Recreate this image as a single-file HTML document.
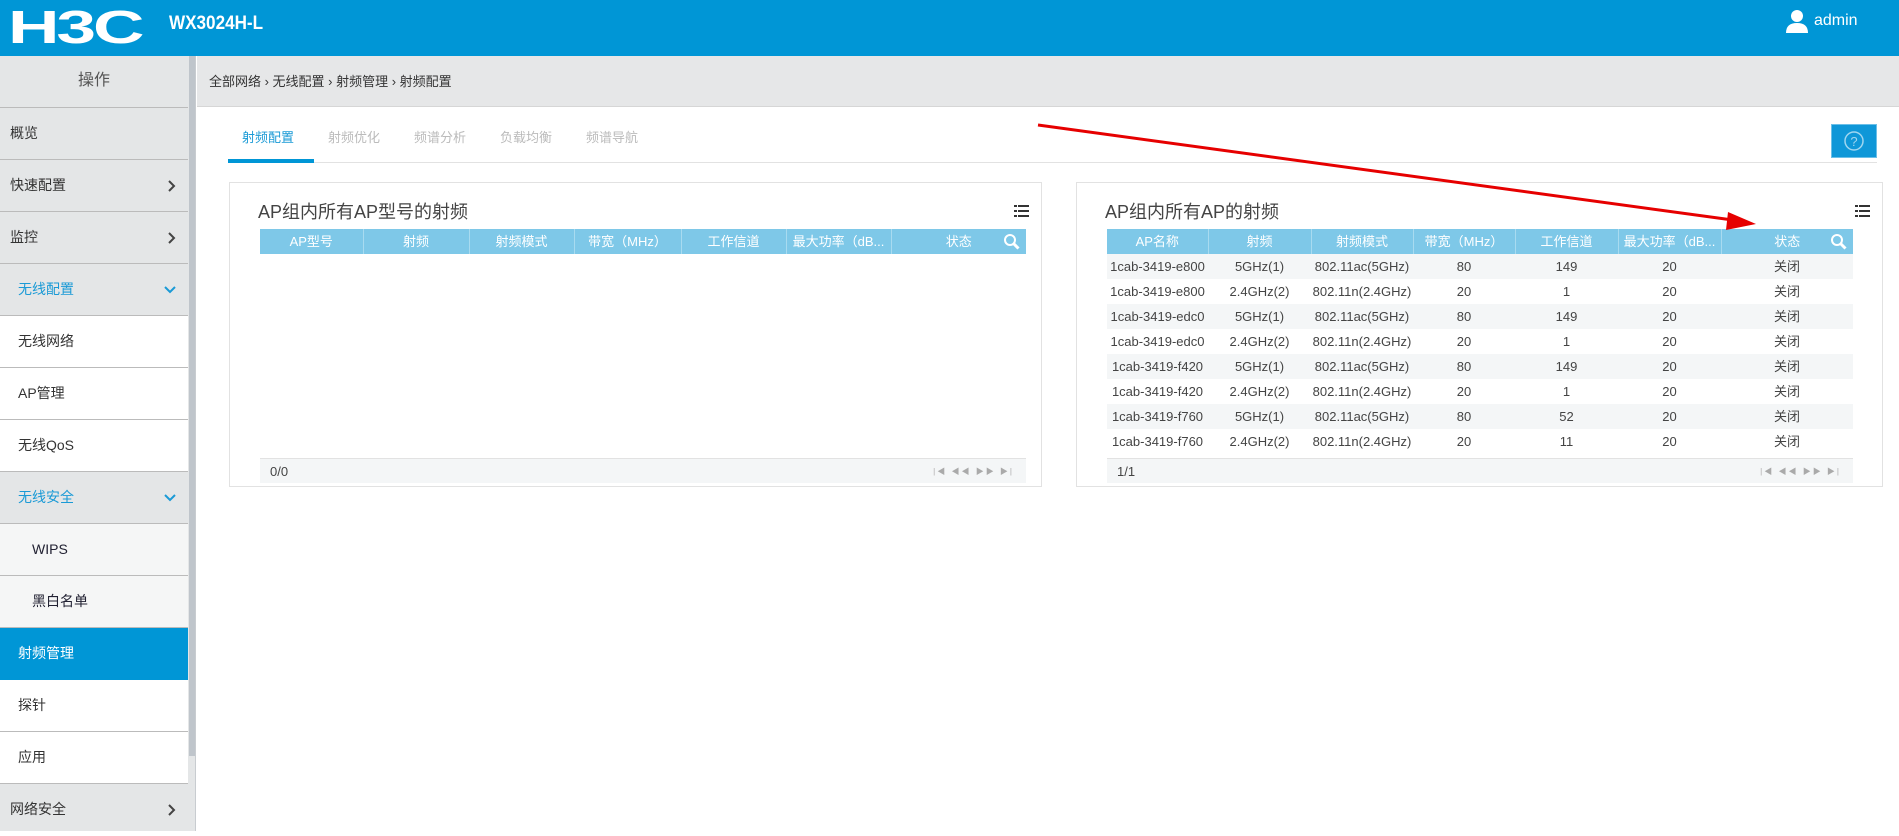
<!DOCTYPE html>
<html><head><meta charset="utf-8">
<style>
*{box-sizing:border-box;margin:0;padding:0}
body{width:1899px;height:831px;overflow:hidden;background:#fff;font-family:"Liberation Sans","Noto Sans CJK SC",sans-serif;color:#333;position:relative}
.hdr{position:absolute;left:0;top:0;width:1899px;height:56px;background:#0096d6;color:#fff}
.logo{position:absolute;left:8px;top:4px;font:bold 46px/46px "Liberation Sans",sans-serif;letter-spacing:-2px;transform:scaleX(1.55);transform-origin:left}
.model{position:absolute;left:169px;top:13px;font:bold 19px "Liberation Sans",sans-serif;transform:scaleX(.9);transform-origin:left}
.user{position:absolute;left:1814px;top:12px;font-size:16px}
.side{position:absolute;left:0;top:56px;width:188px;height:775px;background:#e4e6e7}
.sb{position:absolute;left:188px;top:56px;width:8px;height:775px;background:#e4e6e7;border-right:1px solid #c8ccd0}
.sb div{position:absolute;left:1px;top:0;width:6px;height:700px;background:#bfc5cb}
.it{position:absolute;left:0;width:188px;height:52px;border-bottom:1px solid #bbb;font-size:14px;line-height:50px;padding-left:10px;color:#333}
.it svg{position:absolute;right:12px;top:20px}
.crumb{position:absolute;left:197px;top:56px;width:1702px;height:51px;background:#e6e7e8;border-bottom:1px solid #d6d6d6;font-size:13px;line-height:51px;padding-left:12px;color:#333}
.tabs{position:absolute;left:228px;top:162px;width:1649px;border-top:1px solid #e2e2e2}
.tab{position:absolute;top:127px;font-size:13px;color:#bbb}
.help{position:absolute;left:1831px;top:124px;width:46px;height:34px;background:#0f97d8;border:1px solid #6bbfe8}
.panel{position:absolute;top:182px;height:305px;border:1px solid #e2e2e2;background:#fff}
.ptitle{position:absolute;left:28px;top:15px;font-size:18px;color:#444}
.menu{position:absolute;right:12px;top:22px;width:15px;height:12px}
table{position:absolute;border-collapse:collapse;font-size:13px;top:46px;table-layout:fixed}
th{background:#7ec8e8;color:#fff;font-weight:normal;height:25px;line-height:25px;padding:0;border-right:1px solid #a8dbf0;text-align:center;white-space:nowrap;overflow:hidden;vertical-align:middle}
td{height:25px;line-height:25px;padding:0;text-align:center;color:#444;white-space:nowrap;vertical-align:middle}
tr.o td{background:#f4f6f7}
.mg{position:absolute;right:6px;top:4px}
.foot{position:absolute;height:25px;background:#f4f6f7;border-top:1px solid #e2e2e2;font-size:13px;line-height:25px;padding-left:10px;color:#444}
.pg{position:absolute;right:12px;top:0;font-size:8px;color:#aaa;letter-spacing:2px}
</style></head><body>
<div class="hdr">
 <div class="logo">H3C</div>
 <div class="model">WX3024H-L</div>
 <svg style="position:absolute;left:1785px;top:9px" width="24" height="24" viewBox="0 0 24 24"><circle cx="12" cy="7" r="6" fill="#fff"/><path d="M1 24 Q1 14 12 14 Q23 14 23 24Z" fill="#fff"/></svg>
 <div class="user">admin</div>
</div>
<div class="side">
 <div class="it" style="top:0;text-align:center;padding:0;font-size:16px;color:#555">操作</div>
 <div class="it" style="top:52px">概览</div>
 <div class="it" style="top:104px">快速配置<svg width="8" height="12"><polyline points="1,1 6,6 1,11" fill="none" stroke="#444" stroke-width="2"/></svg></div>
 <div class="it" style="top:156px">监控<svg width="8" height="12"><polyline points="1,1 6,6 1,11" fill="none" stroke="#444" stroke-width="2"/></svg></div>
 <div class="it" style="top:208px;color:#1a9ad6;padding-left:18px">无线配置<svg width="12" height="8" style="top:22px"><polyline points="1,1 6,6 11,1" fill="none" stroke="#1a9ad6" stroke-width="2"/></svg></div>
 <div class="it" style="top:260px;background:#fff;padding-left:18px">无线网络</div>
 <div class="it" style="top:312px;background:#fff;padding-left:18px">AP管理</div>
 <div class="it" style="top:364px;background:#fff;padding-left:18px">无线QoS</div>
 <div class="it" style="top:416px;color:#1a9ad6;padding-left:18px">无线安全<svg width="12" height="8" style="top:22px"><polyline points="1,1 6,6 11,1" fill="none" stroke="#1a9ad6" stroke-width="2"/></svg></div>
 <div class="it" style="top:468px;background:#f5f6f6;padding-left:32px;color:#223">WIPS</div>
 <div class="it" style="top:520px;background:#f5f6f6;padding-left:32px;color:#223">黑白名单</div>
 <div class="it" style="top:572px;background:#0096d6;color:#fff;padding-left:18px;border-bottom-color:#0096d6">射频管理</div>
 <div class="it" style="top:624px;background:#fff;padding-left:18px">探针</div>
 <div class="it" style="top:676px;background:#fff;padding-left:18px">应用</div>
 <div class="it" style="top:728px;border:none">网络安全<svg width="8" height="12"><polyline points="1,1 6,6 1,11" fill="none" stroke="#444" stroke-width="2"/></svg></div>
</div>
<div class="sb"><div></div></div>
<div class="crumb">全部网络 › 无线配置 › 射频管理 › 射频配置</div>
<div class="tabs"></div>
<div class="tab" style="left:242px;color:#1a9ad6">射频配置</div>
<div style="position:absolute;left:228px;top:159px;width:86px;height:4px;background:#0096d6"></div>
<div class="tab" style="left:328px">射频优化</div>
<div class="tab" style="left:414px">频谱分析</div>
<div class="tab" style="left:500px">负载均衡</div>
<div class="tab" style="left:586px">频谱导航</div>
<div class="help"><svg width="44" height="32" viewBox="0 0 44 32"><circle cx="22" cy="16" r="9" fill="none" stroke="#9fd6f0" stroke-width="1.5"/><text x="22" y="21" font-size="13" fill="#9fd6f0" text-anchor="middle" font-family="Liberation Sans">?</text></svg></div>

<div class="panel" style="left:229px;width:813px">
 <div class="ptitle">AP组内所有AP型号的射频</div>
 <svg class="menu" viewBox="0 0 15 12"><g fill="#333"><rect x="0" y="0" width="3" height="2"/><rect x="4" y="0" width="11" height="2"/><rect x="0" y="5" width="3" height="2"/><rect x="4" y="5" width="11" height="2"/><rect x="0" y="10" width="3" height="2"/><rect x="4" y="10" width="11" height="2"/></g></svg>
 <table style="left:30px;width:766px">
  <tr><th style="width:103px">AP型号</th><th style="width:106px">射频</th><th style="width:105px">射频模式</th><th style="width:107px">带宽（MHz）</th><th style="width:105px">工作信道</th><th style="width:105px">最大功率（dB...</th><th style="border:none;position:relative">状态<svg class="mg" width="17" height="17" viewBox="0 0 17 17"><circle cx="7" cy="7" r="5" fill="none" stroke="#fff" stroke-width="2"/><line x1="10.5" y1="10.5" x2="15.5" y2="15.5" stroke="#fff" stroke-width="3"/></svg></th></tr>
 </table>
 <div class="foot" style="left:30px;top:275px;width:766px">0/0<span class="pg">|◀ ◀◀ ▶▶ ▶|</span></div>
</div>

<div class="panel" style="left:1076px;width:807px">
 <div class="ptitle">AP组内所有AP的射频</div>
 <svg class="menu" viewBox="0 0 15 12"><g fill="#333"><rect x="0" y="0" width="3" height="2"/><rect x="4" y="0" width="11" height="2"/><rect x="0" y="5" width="3" height="2"/><rect x="4" y="5" width="11" height="2"/><rect x="0" y="10" width="3" height="2"/><rect x="4" y="10" width="11" height="2"/></g></svg>
 <table style="left:30px;width:746px">
  <tr><th style="width:101px">AP名称</th><th style="width:103px">射频</th><th style="width:102px">射频模式</th><th style="width:102px">带宽（MHz）</th><th style="width:103px">工作信道</th><th style="width:103px">最大功率（dB...</th><th style="border:none;position:relative">状态<svg class="mg" width="17" height="17" viewBox="0 0 17 17"><circle cx="7" cy="7" r="5" fill="none" stroke="#fff" stroke-width="2"/><line x1="10.5" y1="10.5" x2="15.5" y2="15.5" stroke="#fff" stroke-width="3"/></svg></th></tr>
  <tr class="o"><td>1cab-3419-e800</td><td>5GHz(1)</td><td>802.11ac(5GHz)</td><td>80</td><td>149</td><td>20</td><td>关闭</td></tr>
  <tr><td>1cab-3419-e800</td><td>2.4GHz(2)</td><td>802.11n(2.4GHz)</td><td>20</td><td>1</td><td>20</td><td>关闭</td></tr>
  <tr class="o"><td>1cab-3419-edc0</td><td>5GHz(1)</td><td>802.11ac(5GHz)</td><td>80</td><td>149</td><td>20</td><td>关闭</td></tr>
  <tr><td>1cab-3419-edc0</td><td>2.4GHz(2)</td><td>802.11n(2.4GHz)</td><td>20</td><td>1</td><td>20</td><td>关闭</td></tr>
  <tr class="o"><td>1cab-3419-f420</td><td>5GHz(1)</td><td>802.11ac(5GHz)</td><td>80</td><td>149</td><td>20</td><td>关闭</td></tr>
  <tr><td>1cab-3419-f420</td><td>2.4GHz(2)</td><td>802.11n(2.4GHz)</td><td>20</td><td>1</td><td>20</td><td>关闭</td></tr>
  <tr class="o"><td>1cab-3419-f760</td><td>5GHz(1)</td><td>802.11ac(5GHz)</td><td>80</td><td>52</td><td>20</td><td>关闭</td></tr>
  <tr><td>1cab-3419-f760</td><td>2.4GHz(2)</td><td>802.11n(2.4GHz)</td><td>20</td><td>11</td><td>20</td><td>关闭</td></tr>
 </table>
 <div class="foot" style="left:30px;top:275px;width:746px">1/1<span class="pg">|◀ ◀◀ ▶▶ ▶|</span></div>
</div>

<svg style="position:absolute;left:0;top:0" width="1899" height="831"><line x1="1038" y1="125" x2="1740" y2="221" stroke="#e60000" stroke-width="3"/><polygon points="1756,224 1728,212 1726,230" fill="#e60000"/></svg>
</body></html>
